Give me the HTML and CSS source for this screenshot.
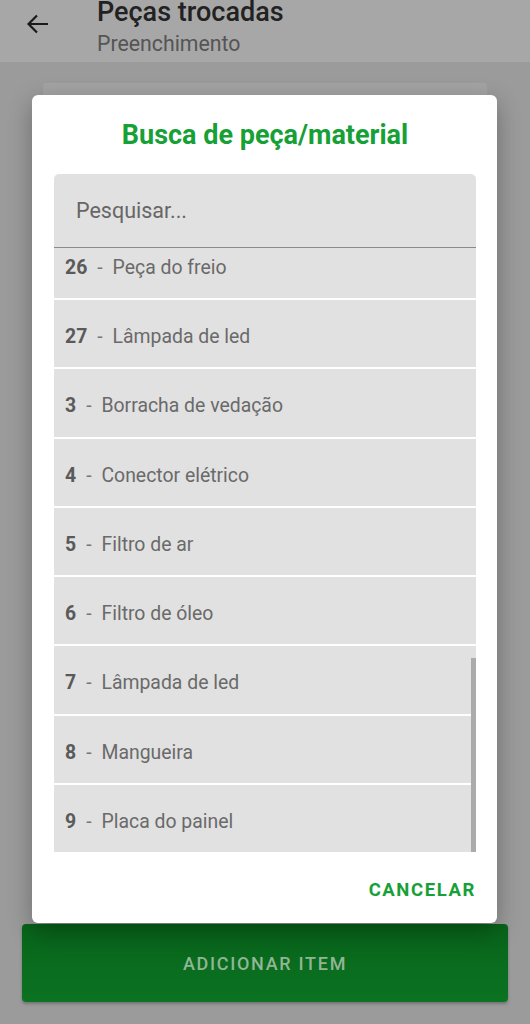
FILE: index.html
```html
<!DOCTYPE html>
<html lang="pt">
<head>
<meta charset="utf-8">
<title>Peças trocadas</title>
<link rel="stylesheet" href="styles.css">
</head>
<body>
<div class="page">
  <header class="appbar">
    <svg class="back" width="26" height="26" viewBox="0 0 26 26"><path d="M23 13H3.5M12 4.5L3.5 13l8.5 8.5" fill="none" stroke="#1a1a1a" stroke-width="2.2"/></svg>
    <div class="titles">
      <div class="title">Peças trocadas</div>
      <div class="subtitle">Preenchimento</div>
    </div>
  </header>
  <main class="content">
    <div class="card"></div>
  </main>
  <div class="footer">
    <div class="add-btn">ADICIONAR ITEM</div>
  </div>
</div>

<div class="dialog">
  <h2 class="dlg-title">Busca de peça/material</h2>
  <div class="search">Pesquisar...</div>
  <div class="list">
    <div class="rows">
      <div class="row first"><b>26</b><span class="dash">-</span><span class="name">Peça do freio</span></div>
      <div class="row"><b>27</b><span class="dash">-</span><span class="name">Lâmpada de led</span></div>
      <div class="row"><b>3</b><span class="dash">-</span><span class="name">Borracha de vedação</span></div>
      <div class="row"><b>4</b><span class="dash">-</span><span class="name">Conector elétrico</span></div>
      <div class="row"><b>5</b><span class="dash">-</span><span class="name">Filtro de ar</span></div>
      <div class="row"><b>6</b><span class="dash">-</span><span class="name">Filtro de óleo</span></div>
      <div class="row"><b>7</b><span class="dash">-</span><span class="name">Lâmpada de led</span></div>
      <div class="row"><b>8</b><span class="dash">-</span><span class="name">Mangueira</span></div>
      <div class="row"><b>9</b><span class="dash">-</span><span class="name">Placa do painel</span></div>
    </div>
    <div class="scrollbar"></div>
  </div>
  <div class="actions"><span class="cancel">CANCELAR</span></div>
</div>
</body>
</html>
```

FILE: styles.css
```css
* { box-sizing: border-box; }
html, body { margin: 0; padding: 0; }
body {
  width: 530px;
  height: 1024px;
  overflow: hidden;
  font-family: Roboto, "Noto Sans", "Liberation Sans", sans-serif;
  background: #9b9b9b;
  position: relative;
}
.page {
  height: 1024px;
  display: flex;
  flex-direction: column;
}
.appbar {
  height: 62px;
  background: #a7a7a7;
  display: flex;
  align-items: flex-start;
  padding-left: 25px;
}
.back { margin-top: 11px; }
.titles { margin-left: 46px; margin-top: -6px; }
.title {
  font-size: 27px;
  font-weight: 500;
  color: #222;
  line-height: 36px;
}
.subtitle {
  font-size: 21.3px;
  color: #555;
  line-height: 27px;
}
.content {
  flex: 1;
  padding: 21px 43px 0;
}
.card {
  height: 40px;
  background: #a3a3a3;
  border-radius: 3px;
}
.footer {
  padding: 0 22px 22px;
}
.add-btn {
  height: 78px;
  border-radius: 4px;
  background: linear-gradient(#08641a, #0b7322);
  color: #90b696;
  font-size: 18px;
  font-weight: 500;
  letter-spacing: 1.7px;
  display: flex;
  align-items: center;
  justify-content: center;
  box-shadow: 0 2px 3px rgba(0,0,0,0.25);
}

.dialog {
  position: absolute;
  left: 32px;
  top: 95px;
  width: 465px;
  height: 828px;
  background: #fff;
  border-radius: 6px;
  box-shadow: 0 8px 24px rgba(0,0,0,0.3);
  padding: 0 21px 0 22px;
  display: flex;
  flex-direction: column;
}
.dlg-title {
  margin: 0;
  padding-top: 22px;
  height: 79px;
  text-align: center;
  font-size: 27px;
  font-weight: 700;
  color: #16a036;
  line-height: 36px;
}
.search {
  height: 74px;
  background: #e1e1e1;
  border-radius: 5px 5px 0 0;
  border-bottom: 1px solid #8a8a8a;
  padding-left: 22px;
  display: flex;
  align-items: center;
  font-size: 21.5px;
  color: #666;
}
.list {
  height: 604px;
  overflow: hidden;
  position: relative;
}
.rows {
  display: flex;
  flex-direction: column;
  gap: 2px;
  margin-top: -17.25px;
}
.row {
  height: 67.25px;
  flex: none;
  background: #e1e1e1;
  display: flex;
  align-items: center;
  padding-left: 11px;
  padding-top: 6px;
  font-size: 19.4px;
  color: #6a6a6a;
}
.row b { color: #5a5a5a; font-weight: 700; }
.dash { margin: 0 10px 0 10px; color: #777; }
.scrollbar {
  position: absolute;
  right: 0;
  top: 410px;
  width: 5px;
  height: 194px;
  background: #ababab;
}
.actions {
  flex: 1;
  display: flex;
  justify-content: flex-end;
  align-items: center;
  padding-top: 4px;
}
.cancel {
  font-size: 18.5px;
  font-weight: 700;
  letter-spacing: 1.6px;
  color: #18a038;
}
```
